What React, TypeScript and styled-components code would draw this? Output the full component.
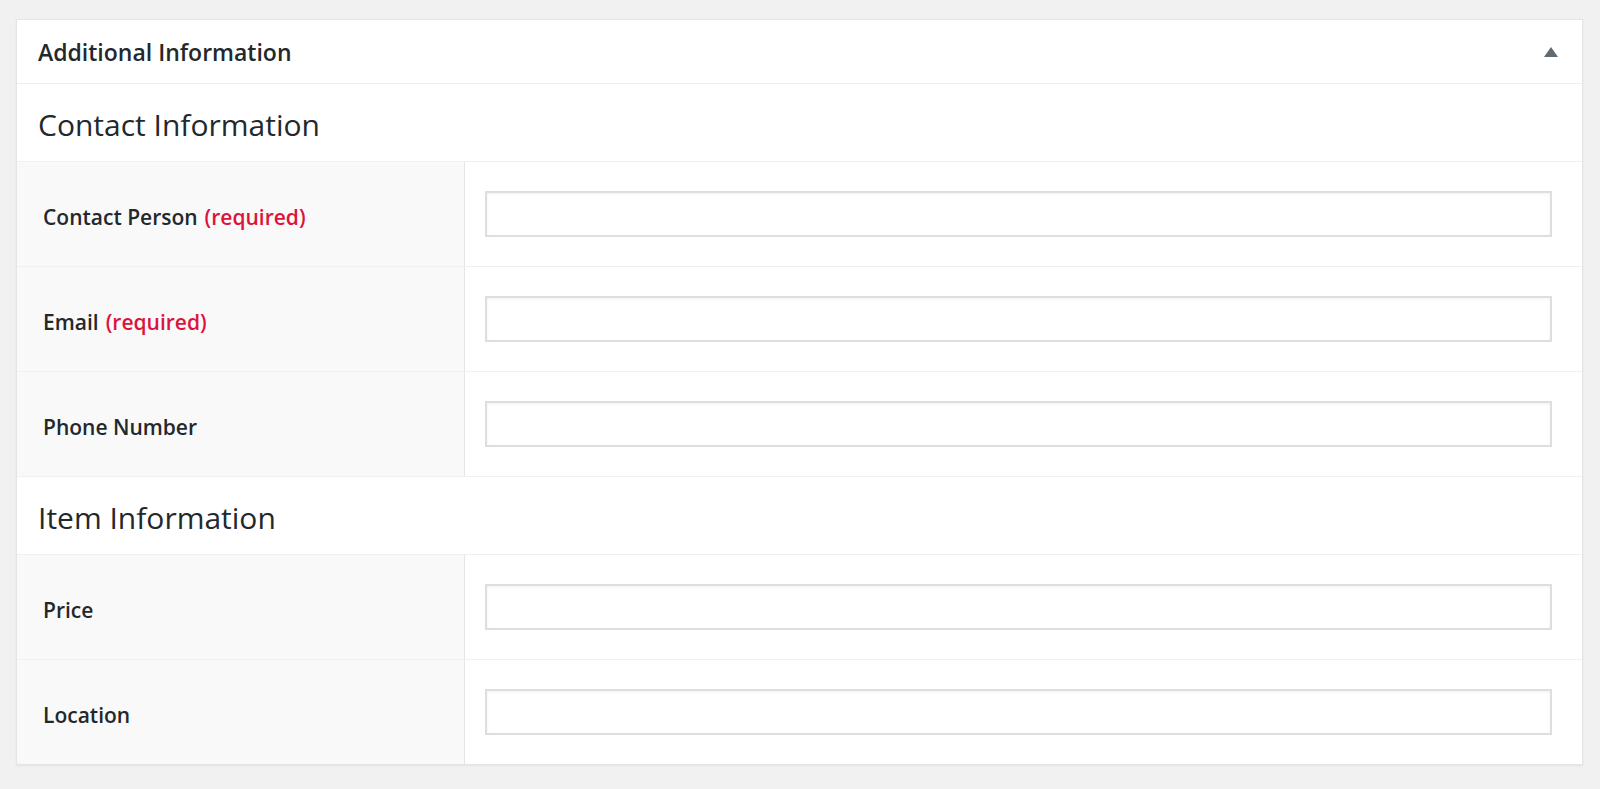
import React from "react";
import styled, { createGlobalStyle } from "styled-components";

const GlobalStyle = createGlobalStyle`
  body {
    margin: 0;
    background: #f1f1f1;
    font-family: "Open Sans", "Noto Sans", sans-serif;
    color: #23282d;
  }
`;

const Page = styled.div`
  padding: 19px 17px 24px 16px;
`;

const Panel = styled.div`
  background: #fff;
  border: 1px solid #e5e5e5;
  box-shadow: 0 1px 2px rgba(0, 0, 0, 0.06);
`;

const PanelHeader = styled.div`
  height: 63px;
  display: flex;
  align-items: center;
  justify-content: space-between;
  padding: 0 24px 0 21px;
  border-bottom: 1px solid #eeeeee;
`;

const PanelTitle = styled.h2`
  margin: 0;
  font-size: 23px;
  font-weight: 600;
  color: #23282d;
`;

const Toggle = styled.svg`
  width: 14px;
  height: 10px;
  fill: #606a73;
`;

const SectionTitle = styled.h3`
  margin: 0;
  height: 73px;
  display: flex;
  align-items: center;
  padding: 4px 21px 0;
  border-bottom: 1px solid #f0f0f0;
  font-size: 30px;
  font-weight: 400;
  color: #23282d;
`;

// the very last row of the panel drops its divider, the panel border closes it
const Row = styled.div<{ $end?: boolean }>`
  display: grid;
  grid-template-columns: 448px 1fr;
  height: ${(p) => (p.$end ? "104px" : "105px")};
  box-sizing: border-box;
  border-bottom: ${(p) => (p.$end ? "none" : "1px solid #f0f0f0")};
`;

const LabelCell = styled.div`
  background: #f9f9f9;
  border-right: 1px solid #e5e5e5;
  display: flex;
  align-items: center;
  padding: 5px 26px 0;
  font-size: 21px;
  font-weight: 600;
  color: #23282d;
`;

const Required = styled.span`
  color: #dc143c;
  margin-left: 7px;
`;

const FieldCell = styled.div`
  display: flex;
  align-items: center;
  padding: 0 30px 0 20px;
`;

const Input = styled.input`
  width: 100%;
  height: 46px;
  box-sizing: border-box;
  border: 2px solid #dedede;
  box-shadow: inset 0 1px 3px rgba(0, 0, 0, 0.06);
  background: #fff;
  outline: none;
  font: inherit;
  font-size: 20px;
  padding: 0 10px;
`;

type Field = { label: string; required?: boolean };

const sections: { title: string; fields: Field[] }[] = [
  {
    title: "Contact Information",
    fields: [
      { label: "Contact Person", required: true },
      { label: "Email", required: true },
      { label: "Phone Number" },
    ],
  },
  {
    title: "Item Information",
    fields: [{ label: "Price" }, { label: "Location" }],
  },
];

export default function App() {
  return (
    <Page>
      <GlobalStyle />
      <Panel>
        <PanelHeader>
          <PanelTitle>Additional Information</PanelTitle>
          <Toggle viewBox="0 0 14 10">
            <polygon points="7,0 14,10 0,10" />
          </Toggle>
        </PanelHeader>
        {sections.map((section, i) => (
          <div key={section.title}>
            <SectionTitle>{section.title}</SectionTitle>
            {section.fields.map((field, j) => (
              <Row
                key={field.label}
                $end={i === sections.length - 1 && j === section.fields.length - 1}
              >
                <LabelCell>
                  {field.label}
                  {field.required && <Required>(required)</Required>}
                </LabelCell>
                <FieldCell>
                  <Input type="text" />
                </FieldCell>
              </Row>
            ))}
          </div>
        ))}
      </Panel>
    </Page>
  );
}
